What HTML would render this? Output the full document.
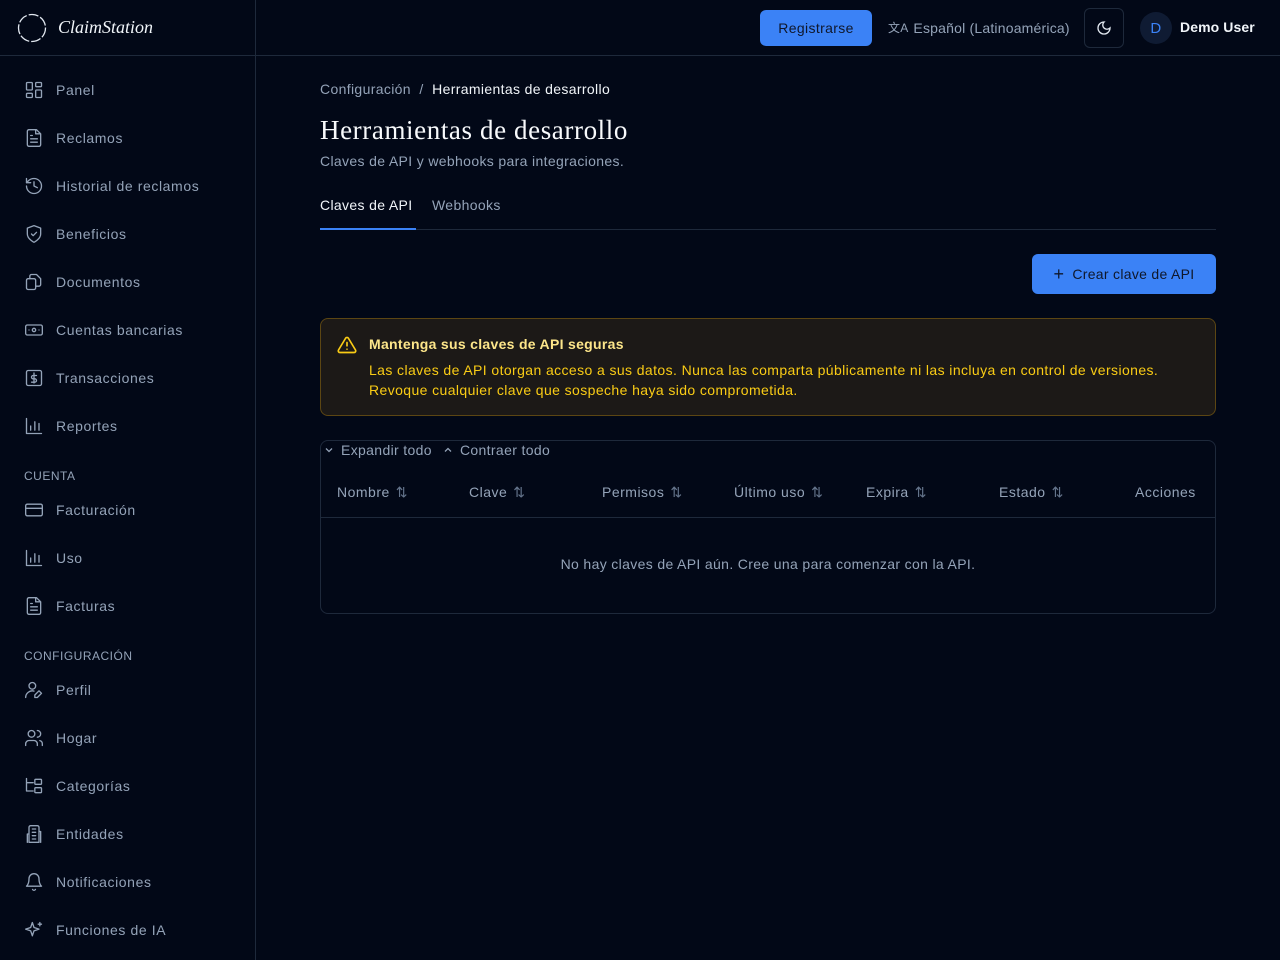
<!DOCTYPE html>
<html><head><meta charset="utf-8"><style>
*{box-sizing:border-box;margin:0;padding:0}
body{width:1280px;height:960px;background:#020817;font-family:"Liberation Sans",sans-serif;color:#e2e8f0;position:relative;overflow:hidden;font-size:14px;letter-spacing:.35px}
.side{position:absolute;left:0;top:0;width:256px;height:960px;border-right:1px solid #1e293b}
.logo{height:56px;border-bottom:1px solid #1e293b;display:flex;align-items:center;padding-left:17px}
.logo span{font-family:"Liberation Serif",serif;font-style:italic;font-size:18px;color:#f1f5f9;margin-left:11px;letter-spacing:0}
.item{position:absolute;left:24px;display:flex;align-items:center;color:#94a3b8;font-size:14px;letter-spacing:.6px}
.item svg{width:20px;height:20px;margin-right:12px;fill:none;stroke:#94a3b8;stroke-width:1.6;stroke-linecap:round;stroke-linejoin:round}
.sec{position:absolute;left:24px;font-size:12px;color:#94a3b8;letter-spacing:.5px}
.top{position:absolute;left:256px;right:0;top:0;height:56px;border-bottom:1px solid #1e293b}
.abs{position:absolute}
.th{position:absolute;top:484px;color:#94a3b8;letter-spacing:.5px}
.th span{color:#64748b;margin-left:6px}
</style></head><body>
<div class="side">
<div class="logo"><svg width="30" height="30" viewBox="0 0 30 30"><circle cx="15" cy="15" r="13.5" fill="none" stroke="#e2e8f0" stroke-width="1.3" stroke-dasharray="10 2"/></svg><span>ClaimStation</span></div>
</div>
<div class="item" style="top:80px"><svg viewBox="0 0 24 24"><rect x="3" y="3" width="7" height="9" rx="1"/><rect x="14" y="3" width="7" height="5" rx="1"/><rect x="14" y="12" width="7" height="9" rx="1"/><rect x="3" y="16" width="7" height="5" rx="1"/></svg>Panel</div>
<div class="item" style="top:128px"><svg viewBox="0 0 24 24"><path d="M15 2H6a2 2 0 0 0-2 2v16a2 2 0 0 0 2 2h12a2 2 0 0 0 2-2V7z"/><path d="M14 2v5h5M16 13H8M16 17H8M10 9H8"/></svg>Reclamos</div>
<div class="item" style="top:176px"><svg viewBox="0 0 24 24"><path d="M3 12a9 9 0 1 0 9-9 9.7 9.7 0 0 0-6.7 2.7L3 8"/><path d="M3 3v5h5M12 7v5l4 2"/></svg>Historial de reclamos</div>
<div class="item" style="top:224px"><svg viewBox="0 0 24 24"><path d="M12 22s8-4 8-10V5l-8-3-8 3v7c0 6 8 10 8 10z"/><path d="m9 12 2 2 4-4"/></svg>Beneficios</div>
<div class="item" style="top:272px"><svg viewBox="0 0 24 24"><rect x="3" y="8" width="11" height="13" rx="2"/><path d="M7 8V5a2 2 0 0 1 2-2h6l5 5v7a2 2 0 0 1-2 2h-4"/></svg>Documentos</div>
<div class="item" style="top:320px"><svg viewBox="0 0 24 24"><rect x="2" y="6" width="20" height="12" rx="2"/><circle cx="12" cy="12" r="2"/><path d="M6 12h.01M18 12h.01"/></svg>Cuentas bancarias</div>
<div class="item" style="top:368px"><svg viewBox="0 0 24 24"><rect x="3" y="3" width="18" height="18" rx="2"/><path d="M12 6v12M15 9h-4a2 2 0 0 0 0 4h2a2 2 0 0 1 0 4H9"/></svg>Transacciones</div>
<div class="item" style="top:416px"><svg viewBox="0 0 24 24"><path d="M3 3v18h18M8 17v-5M13 17V7M18 17v-8"/></svg>Reportes</div>
<div class="sec" style="top:469px">CUENTA</div>
<div class="item" style="top:500px"><svg viewBox="0 0 24 24"><rect x="2" y="5" width="20" height="14" rx="2"/><path d="M2 10h20"/></svg>Facturación</div>
<div class="item" style="top:548px"><svg viewBox="0 0 24 24"><path d="M3 3v18h18M8 17v-5M13 17V7M18 17v-8"/></svg>Uso</div>
<div class="item" style="top:596px"><svg viewBox="0 0 24 24"><path d="M15 2H6a2 2 0 0 0-2 2v16a2 2 0 0 0 2 2h12a2 2 0 0 0 2-2V7z"/><path d="M14 2v5h5M16 13H8M16 17H8M10 9H8"/></svg>Facturas</div>
<div class="sec" style="top:649px">CONFIGURACIÓN</div>
<div class="item" style="top:680px"><svg viewBox="0 0 24 24"><circle cx="10" cy="7" r="4"/><path d="M2 21a8 8 0 0 1 10-7.7M18 13l3 3-5 5h-3v-3z"/></svg>Perfil</div>
<div class="item" style="top:728px"><svg viewBox="0 0 24 24"><circle cx="9" cy="7" r="4"/><path d="M2 21v-2a4 4 0 0 1 4-4h6a4 4 0 0 1 4 4v2M16 3a4 4 0 0 1 0 8M22 21v-2a4 4 0 0 0-3-3.9"/></svg>Hogar</div>
<div class="item" style="top:776px"><svg viewBox="0 0 24 24"><path d="M3 3v15h8M3 8h8"/><rect x="13" y="4" width="8" height="6" rx="1"/><rect x="13" y="14" width="8" height="6" rx="1"/></svg>Categorías</div>
<div class="item" style="top:824px"><svg viewBox="0 0 24 24"><path d="M6 22V4a2 2 0 0 1 2-2h8a2 2 0 0 1 2 2v18zM6 12H4v10M18 9h2v13M10 6h4M10 10h4M10 14h4M10 18h4"/></svg>Entidades</div>
<div class="item" style="top:872px"><svg viewBox="0 0 24 24"><path d="M6 8a6 6 0 0 1 12 0c0 7 3 9 3 9H3s3-2 3-9M10.3 21a1.9 1.9 0 0 0 3.4 0"/></svg>Notificaciones</div>
<div class="item" style="top:920px"><svg viewBox="0 0 24 24"><path d="M10 3l2 6 6 2-6 2-2 6-2-6-6-2 6-2zM19 3v4M17 5h4"/></svg>Funciones de IA</div>

<div class="top"></div>
<div class="abs" style="left:760px;top:10px;width:112px;height:36px;background:#3b82f6;border-radius:6px;color:#0f172a;font-size:14px;display:flex;align-items:center;justify-content:center">Registrarse</div>
<div class="abs" style="left:888px;top:19px;color:#94a3b8;font-size:14px;display:flex;align-items:center;letter-spacing:.2px"><span style="font-size:12px;margin-right:5px">文A</span>Español (Latinoamérica)</div>
<div class="abs" style="left:1084px;top:8px;width:40px;height:40px;border:1px solid #1e293b;border-radius:6px;display:flex;align-items:center;justify-content:center"><svg width="16" height="16" viewBox="0 0 24 24" fill="none" stroke="#e2e8f0" stroke-width="2"><path d="M12 3a6 6 0 0 0 9 9 9 9 0 1 1-9-9z"/></svg></div>
<div class="abs" style="left:1140px;top:12px;width:32px;height:32px;border-radius:50%;background:#0f1b33;color:#3b82f6;display:flex;align-items:center;justify-content:center;font-size:15px">D</div>
<div class="abs" style="left:1180px;top:19px;font-weight:bold;color:#f1f5f9;letter-spacing:.1px">Demo User</div>

<div class="abs" style="left:320px;top:81px;color:#94a3b8">Configuración &nbsp;/&nbsp; <span style="color:#f1f5f9">Herramientas de desarrollo</span></div>
<div class="abs" style="left:320px;top:115px;font-family:'Liberation Serif',serif;font-size:27px;color:#f8fafc;letter-spacing:.6px">Herramientas de desarrollo</div>
<div class="abs" style="left:320px;top:153px;color:#94a3b8">Claves de API y webhooks para integraciones.</div>
<div class="abs" style="left:320px;top:229px;width:896px;height:1px;background:#1e293b"></div>
<div class="abs" style="left:320px;top:197px;color:#f1f5f9">Claves de API</div>
<div class="abs" style="left:320px;top:228px;width:96px;height:2px;background:#3b82f6"></div>
<div class="abs" style="left:432px;top:197px;color:#94a3b8">Webhooks</div>
<div class="abs" style="left:1032px;top:254px;width:184px;height:40px;background:#3b82f6;border-radius:6px;color:#0f172a;display:flex;align-items:center;justify-content:center;letter-spacing:.3px"><span style="font-size:18px;margin-right:8px">+</span>Crear clave de API</div>

<div class="abs" style="left:320px;top:318px;width:896px;height:98px;border:1px solid #5c4613;background:#1c1917;border-radius:8px"></div>
<svg class="abs" style="left:337px;top:335px" width="20" height="20" viewBox="0 0 24 24" fill="none" stroke="#facc15" stroke-width="2" stroke-linecap="round" stroke-linejoin="round"><path d="M10.3 3.9 1.8 18a2 2 0 0 0 1.7 3h17a2 2 0 0 0 1.7-3L13.7 3.9a2 2 0 0 0-3.4 0zM12 9v4M12 17h.01"/></svg>
<div class="abs" style="left:369px;top:336px;color:#fde68a;font-weight:bold;letter-spacing:.3px">Mantenga sus claves de API seguras</div>
<div class="abs" style="left:369px;top:360px;color:#facc15;line-height:20px;letter-spacing:.4px">Las claves de API otorgan acceso a sus datos. Nunca las comparta públicamente ni las incluya en control de versiones.<br>Revoque cualquier clave que sospeche haya sido comprometida.</div>

<div class="abs" style="left:320px;top:440px;width:896px;height:174px;border:1px solid #1e293b;border-radius:8px"></div>
<div class="abs" style="left:323px;top:442px;color:#94a3b8;display:flex;align-items:center"><svg width="12" height="12" viewBox="0 0 24 24" fill="none" stroke="#94a3b8" stroke-width="2.5"><path d="m6 9 6 6 6-6"/></svg><span style="margin-left:6px">Expandir todo</span><svg style="margin-left:10px" width="12" height="12" viewBox="0 0 24 24" fill="none" stroke="#94a3b8" stroke-width="2.5"><path d="m6 15 6-6 6 6"/></svg><span style="margin-left:6px">Contraer todo</span></div>
<div class="abs" style="left:321px;top:517px;width:894px;height:1px;background:#1e293b"></div>
<div class="th" style="left:337px">Nombre<span>⇅</span></div>
<div class="th" style="left:469px">Clave<span>⇅</span></div>
<div class="th" style="left:602px">Permisos<span>⇅</span></div>
<div class="th" style="left:734px">Último uso<span>⇅</span></div>
<div class="th" style="left:866px">Expira<span>⇅</span></div>
<div class="th" style="left:999px">Estado<span>⇅</span></div>
<div class="th" style="left:1135px">Acciones</div>
<div class="abs" style="top:556px;left:320px;width:896px;text-align:center;color:#94a3b8">No hay claves de API aún. Cree una para comenzar con la API.</div>
</body></html>
